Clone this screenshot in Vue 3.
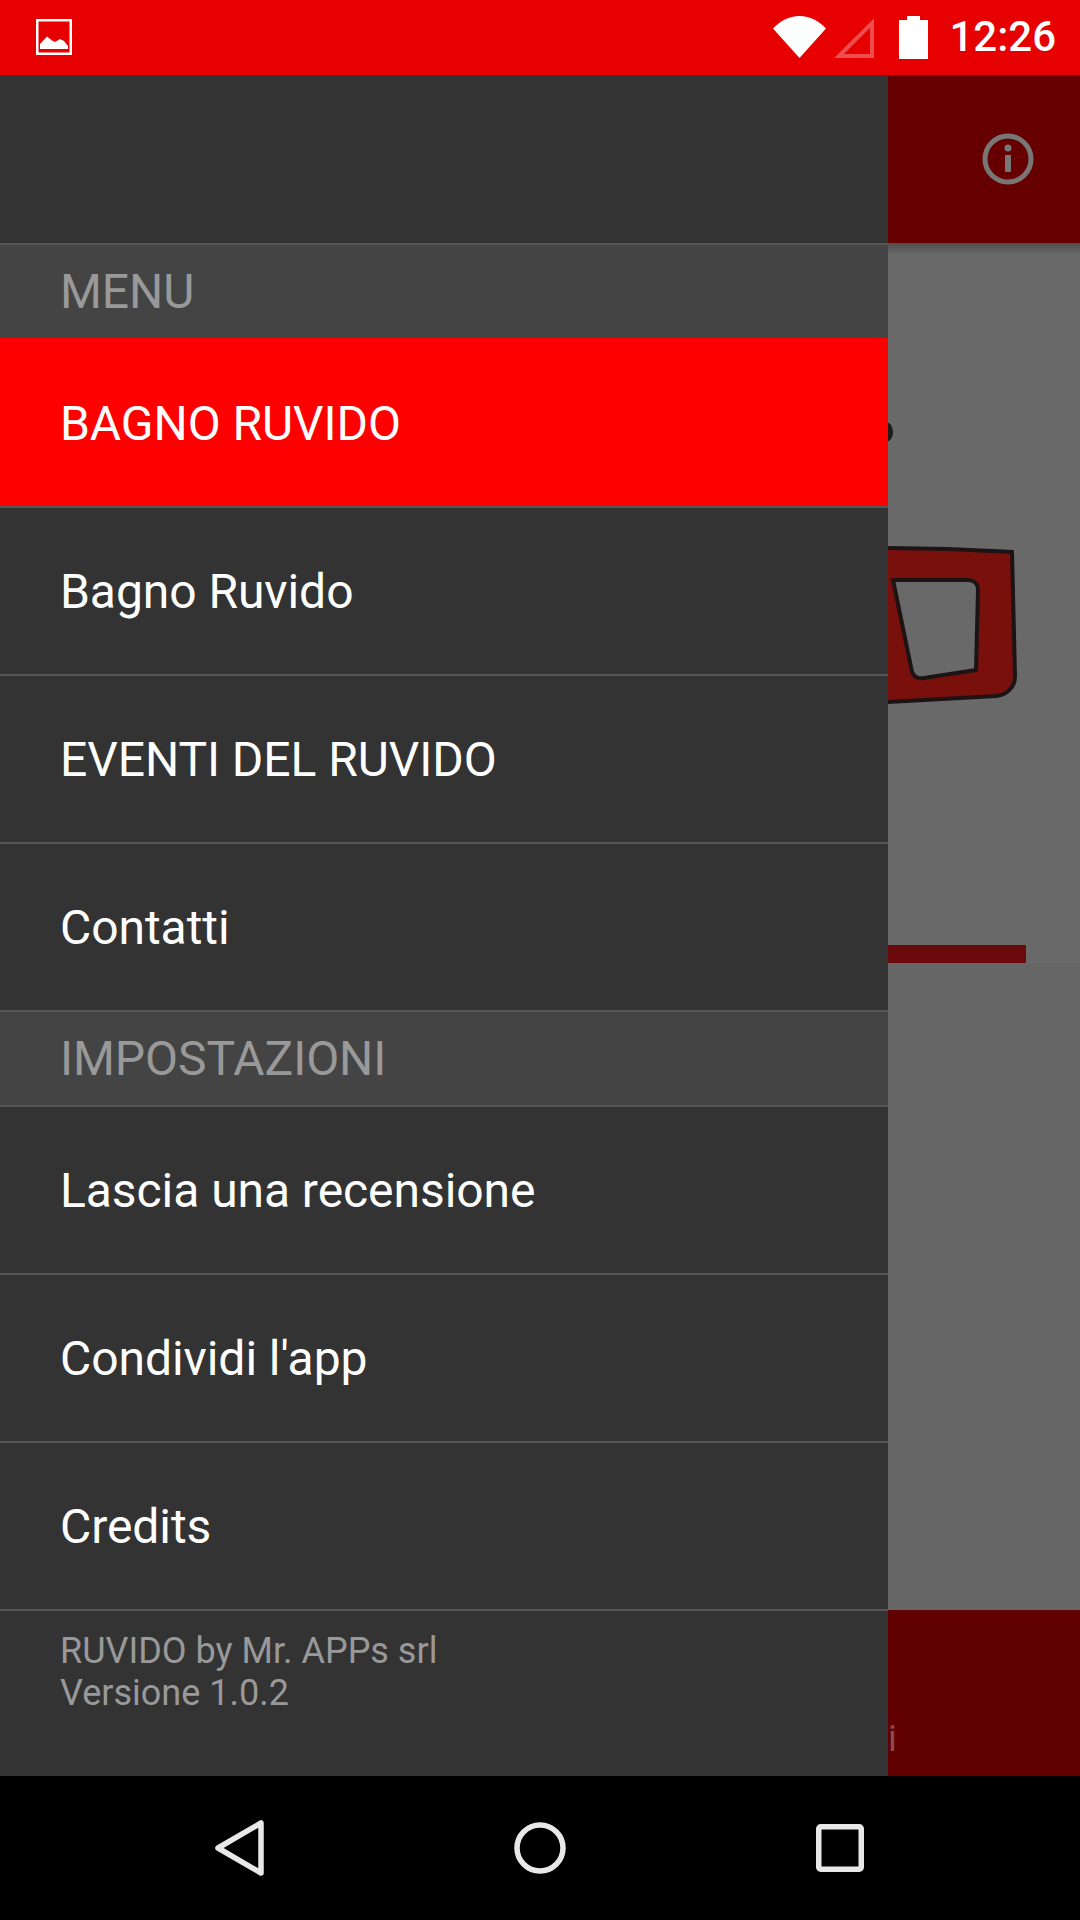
<template>
  <div class="screen">
    <header class="status-bar">
      <svg class="status-bar__photo" width="36" height="36" viewBox="0 0 36 36">
        <rect x="1.25" y="1.25" width="33.5" height="33.5" fill="none" stroke="#fff" stroke-width="2.5" />
        <path d="M4 30V25L11 17.5L16 21.5L19 23L24 20L28 22L32 27V30Z" fill="#fff" />
      </svg>
      <div class="status-bar__right">
        <svg width="53" height="42" viewBox="0 0 53 42">
          <path d="M0 12.5C7 5 16 0 26.500 0S46 5 53 12.500L26.500 42Z" fill="#fff" />
        </svg>
        <svg class="status-bar__signal" width="41" height="41" viewBox="0 0 41 41">
          <path d="M6 39L39 6V39Z" fill="none" stroke="#fff" stroke-opacity="0.3" stroke-width="4" />
        </svg>
        <svg class="status-bar__battery" width="29" height="43" viewBox="0 0 29 43">
          <path d="M8 0H21V4H29V43H0V4H8Z" fill="#fff" />
        </svg>
        <span class="status-bar__time">12:26</span>
      </div>
    </header>

    <main class="main">
      <nav class="drawer">
        <div class="drawer__top"></div>
        <template v-for="row in rows" :key="row.label">
          <div v-if="row.section" class="drawer__section">
            {{ row.label }}
          </div>
          <div v-else class="drawer__item" :class="{ 'drawer__item--active': row.active }">
            {{ row.label }}
          </div>
        </template>
        <footer class="drawer__footer">
          <div>RUVIDO by Mr. APPs srl</div>
          <div>Versione 1.0.2</div>
        </footer>
      </nav>

      <section class="behind">
        <div class="behind__toolbar">
          <svg width="52" height="52" viewBox="0 0 52 52">
            <circle cx="26" cy="26" r="23" fill="none" stroke="#777" stroke-width="5" />
            <circle cx="26" cy="15" r="3.500" fill="#777" />
            <rect x="23" y="22" width="6" height="17" rx="1" fill="#777" />
          </svg>
        </div>
        <div class="behind__body">
          <svg class="behind__image" width="192" height="720" viewBox="0 0 192 720">
            <defs>
              <linearGradient id="toolbar-shadow" x1="0" y1="0" x2="0" y2="1">
                <stop offset="0" stop-color="#4e4e4e" />
                <stop offset="1" stop-color="#696969" />
              </linearGradient>
            </defs>
            <rect width="192" height="720" fill="#696969" />
            <rect width="192" height="12" fill="url(#toolbar-shadow)" />
            <ellipse cx="-2" cy="189" rx="7" ry="10" fill="#1c1c1c" />
            <path
              d="M-2 305L60 306L124 309L127 433C127 445 118 452 108 453L-2 459Z
                 M5 337L24 429C26 434 30 436 36 435L88 427L90 347C90 341 86 337 80 337Z"
              fill="#7a100c"
              fill-rule="evenodd"
              stroke="#1c1414"
              stroke-width="4"
            />
            <rect y="702" width="138" height="18" fill="#6b0a0c" />
          </svg>
        </div>
        <div class="behind__bottom">i</div>
      </section>
    </main>

    <footer class="nav-bar">
      <svg width="52" height="60" viewBox="0 0 52 60">
        <path d="M47 5V55L4 30Z" fill="none" stroke="#e8e8e8" stroke-width="5.500" stroke-linejoin="round" />
      </svg>
      <svg width="52" height="52" viewBox="0 0 52 52">
        <circle cx="26" cy="26" r="23" fill="none" stroke="#e8e8e8" stroke-width="5.500" />
      </svg>
      <svg width="48" height="48" viewBox="0 0 48 48">
        <rect x="2.750" y="2.750" width="42.500" height="42.500" rx="2" fill="none" stroke="#e8e8e8" stroke-width="5.500" />
      </svg>
    </footer>
  </div>
</template>

<script setup>
const rows = [
  { label: 'MENU', section: true },
  { label: 'BAGNO RUVIDO', active: true },
  { label: 'Bagno Ruvido' },
  { label: 'EVENTI DEL RUVIDO' },
  { label: 'Contatti' },
  { label: 'IMPOSTAZIONI', section: true },
  { label: 'Lascia una recensione' },
  { label: "Condividi l'app" },
  { label: 'Credits' },
]
</script>

<style>
html,
body {
  margin: 0;
  background: #000;
}
</style>

<style scoped>
.screen {
  width: 1080px;
  height: 1920px;
  display: flex;
  flex-direction: column;
  overflow: hidden;
  font-family: Roboto, "Liberation Sans", sans-serif;
}

/* status bar */
.status-bar {
  height: 75px;
  flex: none;
  background: #e60000;
  display: flex;
  align-items: center;
  justify-content: space-between;
  padding: 0 24px 0 36px;
  box-sizing: border-box;
}
.status-bar__photo {
  margin-top: -1px;
}
.status-bar__right {
  display: flex;
  align-items: center;
  margin-top: -1px;
}
.status-bar__signal {
  margin-left: 7px;
}
.status-bar__battery {
  margin-left: 25px;
}
.status-bar__time {
  margin-left: 21px;
  color: #fff;
  font-size: 42px;
  font-weight: 500;
  line-height: 42px;
}

/* contenuto */
.main {
  flex: 1;
  display: flex;
  min-height: 0;
}

/* drawer */
.drawer {
  width: 888px;
  flex: none;
  background: #333;
  display: flex;
  flex-direction: column;
  color: #fff;
  font-size: 48px;
  letter-spacing: -0.06px;
}
.drawer__top {
  height: 168px;
}
.drawer__section,
.drawer__item {
  display: flex;
  align-items: center;
  padding-left: 60px;
  box-sizing: border-box;
  border-top: 2px solid #555;
}
.drawer__section {
  height: 95px;
  background: #444;
  color: #999;
}
.drawer__item {
  height: 168px;
}
.drawer__item--active {
  background: #f00;
  border-top-color: #f00;
}
.drawer__footer {
  flex: 1;
  border-top: 2px solid #555;
  padding: 19px 0 0 60px;
  color: #999;
  font-size: 36px;
  line-height: 42px;
  letter-spacing: 0;
}

/* schermata dietro al drawer */
.behind {
  flex: 1;
  display: flex;
  flex-direction: column;
  background: #666;
}
.behind__toolbar {
  height: 168px;
  flex: none;
  background: #660000;
  display: flex;
  align-items: center;
  justify-content: flex-end;
  padding-right: 46px;
}
.behind__body {
  flex: 1;
}
.behind__image {
  display: block;
}
.behind__bottom {
  height: 166px;
  flex: none;
  box-sizing: border-box;
  padding-top: 111px;
  background: #600000;
  color: #8f4a4a;
  font-size: 36px;
  line-height: 36px;
}

/* nav bar */
.nav-bar {
  height: 144px;
  flex: none;
  background: #000;
  display: grid;
  grid-template-columns: repeat(3, 300px);
  padding: 0 90px;
  box-sizing: border-box;
  align-items: center;
  justify-items: center;
}
</style>
